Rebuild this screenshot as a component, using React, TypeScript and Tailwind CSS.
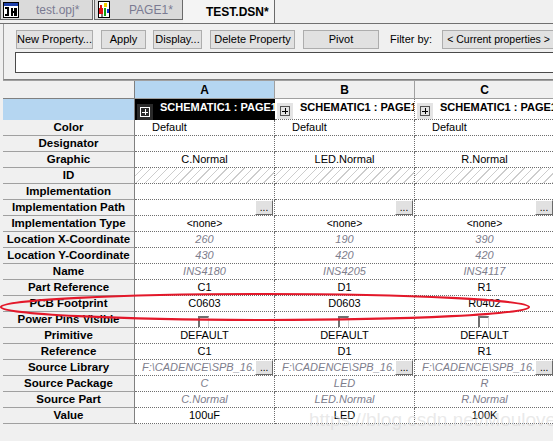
import React from "react";

type Kind = "text" | "left" | "gray" | "small" | "btn" | "path" | "check" | "hatch" | "empty";

interface Row {
  label: string;
  kind: Kind;
  values?: string[];
}

const ROWS: Row[] = [
  { label: "Color", kind: "left", values: ["Default", "Default", "Default"] },
  { label: "Designator", kind: "empty" },
  { label: "Graphic", kind: "text", values: ["C.Normal", "LED.Normal", "R.Normal"] },
  { label: "ID", kind: "hatch" },
  { label: "Implementation", kind: "empty" },
  { label: "Implementation Path", kind: "btn" },
  { label: "Implementation Type", kind: "small", values: ["<none>", "<none>", "<none>"] },
  { label: "Location X-Coordinate", kind: "gray", values: ["260", "190", "390"] },
  { label: "Location Y-Coordinate", kind: "gray", values: ["430", "420", "420"] },
  { label: "Name", kind: "gray", values: ["INS4180", "INS4205", "INS4117"] },
  { label: "Part Reference", kind: "text", values: ["C1", "D1", "R1"] },
  { label: "PCB Footprint", kind: "text", values: ["C0603", "D0603", "R0402"] },
  { label: "Power Pins Visible", kind: "check" },
  { label: "Primitive", kind: "text", values: ["DEFAULT", "DEFAULT", "DEFAULT"] },
  { label: "Reference", kind: "text", values: ["C1", "D1", "R1"] },
  { label: "Source Library", kind: "path", values: ["F:\\CADENCE\\SPB_16.", "F:\\CADENCE\\SPB_16.", "F:\\CADENCE\\SPB_16."] },
  { label: "Source Package", kind: "gray", values: ["C", "LED", "R"] },
  { label: "Source Part", kind: "gray", values: ["C.Normal", "LED.Normal", "R.Normal"] },
  { label: "Value", kind: "text", values: ["100uF", "LED", "100K"] },
];

function DotsButton() {
  return (
    <div className="flex h-[15px] w-[18px] shrink-0 items-end justify-center border border-t-white border-l-white border-r-[#6a6a6a] border-b-[#6a6a6a] bg-[#e1e1e1] pb-[1px] text-[10px] leading-none">
      ...
    </div>
  );
}

function PlusBox({ dark }: { dark?: boolean }) {
  return (
    <div className={`flex h-[16px] w-[16px] shrink-0 items-center justify-center ${dark ? "bg-[#2a2a2a]" : "bg-[#e4e4e4]"}`}>
      <div className={`relative h-[10px] w-[10px] border ${dark ? "border-white" : "border-[#555]"}`}>
        <div className={`absolute left-[1px] top-[3.5px] h-[1px] w-[6px] ${dark ? "bg-white" : "bg-black"}`} />
        <div className={`absolute left-[3.5px] top-[1px] h-[6px] w-[1px] ${dark ? "bg-white" : "bg-black"}`} />
      </div>
    </div>
  );
}

function DataCell({ kind, value }: { kind: Kind; value?: string }) {
  const base = "flex h-[16px] w-[140px] shrink-0 items-center border-r border-b border-dotted border-[#6e6e6e] bg-white";
  if (kind === "hatch") {
    return (
      <div className={`${base} bg-[repeating-linear-gradient(135deg,#ffffff_0px,#ffffff_5px,#cdcdcd_5px,#cdcdcd_6px)]`} />
    );
  }
  if (kind === "btn") {
    return (
      <div className={`${base} justify-end pr-[1px]`}>
        <DotsButton />
      </div>
    );
  }
  if (kind === "path") {
    return (
      <div className={`${base} justify-between pl-[7px] pr-[1px]`}>
        <span className="text-[11px] italic text-[#7d7d8c]">{value}</span>
        <DotsButton />
      </div>
    );
  }
  if (kind === "check") {
    return (
      <div className={`${base} items-end justify-center`}>
        <div className="ml-[-2px] h-[11px] w-[11px] border-t-2 border-l-2 border-r border-t-[#6e6e6e] border-l-[#6e6e6e] border-r-[#d8d8d8]" />
      </div>
    );
  }
  if (kind === "left") {
    return (
      <div className={`${base} pl-[17px]`}>
        <span className="text-[11px]">{value}</span>
      </div>
    );
  }
  if (kind === "empty") return <div className={base} />;
  const cls =
    kind === "gray" ? "text-[11px] italic text-[#7d7d8c]" : kind === "small" ? "text-[10.5px]" : "text-[11px]";
  return (
    <div className={`${base} justify-center`}>
      <span className={cls}>{value}</span>
    </div>
  );
}

function ProjectIcon() {
  return (
    <svg width="16" height="16" viewBox="0 0 16 16">
      <rect x="0.5" y="0.5" width="15" height="15" fill="#fff" stroke="#000" />
      <rect x="1" y="1" width="14" height="3" fill="#1d3faa" />
      <rect x="2" y="5" width="4" height="2" fill="#000" />
      <rect x="4" y="5" width="2" height="9" fill="#000" />
      <rect x="2" y="12" width="3" height="2" fill="#000" />
      <rect x="8" y="6" width="2" height="8" fill="#000" />
      <rect x="11" y="6" width="3" height="8" fill="#000" />
      <rect x="9" y="9" width="3" height="2" fill="#000" />
    </svg>
  );
}

function PageIcon() {
  return (
    <svg width="12" height="17" viewBox="0 0 12 17">
      <rect x="0.5" y="0.5" width="11" height="16" fill="#fff" stroke="#000" />
      <rect x="1" y="7" width="4" height="6" fill="#e01010" />
      <rect x="2" y="4" width="2" height="3" fill="#e01010" />
      <rect x="6" y="2" width="3" height="4" fill="#f2d000" />
      <rect x="6" y="7" width="2" height="8" fill="#10a010" />
      <rect x="9" y="8" width="2" height="4" fill="#1030d0" />
      <rect x="3" y="13" width="2" height="3" fill="#808080" />
    </svg>
  );
}

const btn = "h-[19px] shrink-0 border border-[#adadad] bg-[#e1e1e1] leading-none";

export default function App() {
  return (
    <div className="relative h-[441px] w-[553px] overflow-hidden bg-[#f0f0f0] font-['Liberation_Sans',Arial,sans-serif] text-black">
      {/* Tabs */}
      <div className="flex h-[24px] items-start border-b border-[#707070]">
        <div className="flex h-[20px] w-[93px] shrink-0 items-center border border-t-0 border-[#6a6a6a] bg-[#dadada] pl-[2px]">
          <ProjectIcon />
          <span className="ml-[17px] text-[12px] text-[#7a7a92]">test.opj*</span>
        </div>
        <div className="ml-[1px] flex h-[20px] w-[89px] shrink-0 items-center border border-t-0 border-[#6a6a6a] bg-[#dadada] pl-[3px]">
          <PageIcon />
          <span className="ml-[19px] text-[12px] text-[#7a7a92]">PAGE1*</span>
        </div>
        <div className="flex h-[23px] w-[92px] shrink-0 items-center border-r border-[#6a6a6a] bg-[#f4f4f4] pl-[23px]">
          <span className="text-[12px] font-bold">TEST.DSN*</span>
        </div>
      </div>

      {/* Toolbar panel */}
      <div className="ml-[3px] h-[56px] overflow-hidden border-l border-b border-l-[#a0a0a0] border-b-[#808080] pt-[6px]">
        <div className="flex items-center whitespace-nowrap text-[11px]">
          <button className={`ml-[12px] w-[77px] ${btn}`}>New Property...</button>
          <button className={`ml-[8px] w-[45px] ${btn}`}>Apply</button>
          <button className={`ml-[7px] w-[49px] ${btn}`}>Display...</button>
          <button className={`ml-[8px] w-[85px] ${btn}`}>Delete Property</button>
          <button className={`ml-[8px] w-[76px] ${btn}`}>Pivot</button>
          <span className="ml-[11px] shrink-0">Filter by:</span>
          <div className="ml-[10px] flex h-[19px] w-[130px] shrink-0 items-center border border-[#adadad] bg-[#e1e1e1] pl-[4px] text-[10.5px]">
            &lt; Current properties &gt;
          </div>
        </div>
        <div className="ml-[11px] mt-[3px] h-[21px] w-[560px] border border-[#4a4a4a] bg-white" />
      </div>

      {/* Property grid */}
      <div className="pl-[3px] whitespace-nowrap">
        <div className="flex h-[19px] border-t border-[#a0a0a0]">
          <div className="h-[18px] w-[132px] shrink-0 border-r border-b border-[#808080] bg-[#f0f0f0]" />
          <div className="flex h-[18px] w-[140px] shrink-0 items-center justify-center border-r border-b border-[#a0a0a0] bg-[#b5d6f1] text-[12px] font-bold">A</div>
          <div className="flex h-[18px] w-[140px] shrink-0 items-center justify-center border-r border-b border-[#a0a0a0] bg-[#f0f0f0] text-[12px] font-bold">B</div>
          <div className="flex h-[18px] w-[140px] shrink-0 items-center justify-center border-r border-b border-[#a0a0a0] bg-[#f0f0f0] text-[12px] font-bold">C</div>
        </div>
        <div className="flex h-[21px]">
          <div className="h-[21px] w-[132px] shrink-0 border-r border-[#808080] bg-[#b5d6f1]" />
          <div className="flex h-[21px] w-[140px] shrink-0 items-end overflow-hidden bg-black pl-[2px]">
            <PlusBox dark />
            <span className="mb-[5px] ml-[7px] text-[11px] font-bold leading-[16px] text-white">SCHEMATIC1 : PAGE1</span>
          </div>
          {[0, 1].map((i) => (
            <div key={i} className="flex h-[21px] w-[140px] shrink-0 items-end overflow-hidden border-r border-b border-dotted border-[#6e6e6e] bg-white pl-[2px]">
              <PlusBox />
              <span className="mb-[4px] ml-[7px] text-[11px] font-bold leading-[16px]">SCHEMATIC1 : PAGE1</span>
            </div>
          ))}
        </div>
        {ROWS.map((r) => (
          <div key={r.label} className="flex h-[16px]">
            <div className="flex h-[16px] w-[132px] shrink-0 items-center justify-center border-r border-b border-r-[#808080] border-b-[#a0a0a0] bg-[#f0f0f0] text-[11.5px] font-bold">
              {r.label}
            </div>
            {[0, 1, 2].map((i) => (
              <DataCell key={i} kind={r.kind} value={r.values?.[i]} />
            ))}
          </div>
        ))}
      </div>

      {/* Red annotation ellipse */}
      <svg className="pointer-events-none absolute left-0 top-0" width="553" height="441">
        <ellipse cx="265" cy="307" rx="264" ry="13" fill="none" stroke="#e3182a" strokeWidth="2.2" />
      </svg>

      {/* Watermark */}
      <div className="pointer-events-none absolute left-[309px] top-[406px] text-[19px] text-[#d4d4d4]/50">
        https://blog.csdn.net/Moulover666
      </div>
    </div>
  );
}
